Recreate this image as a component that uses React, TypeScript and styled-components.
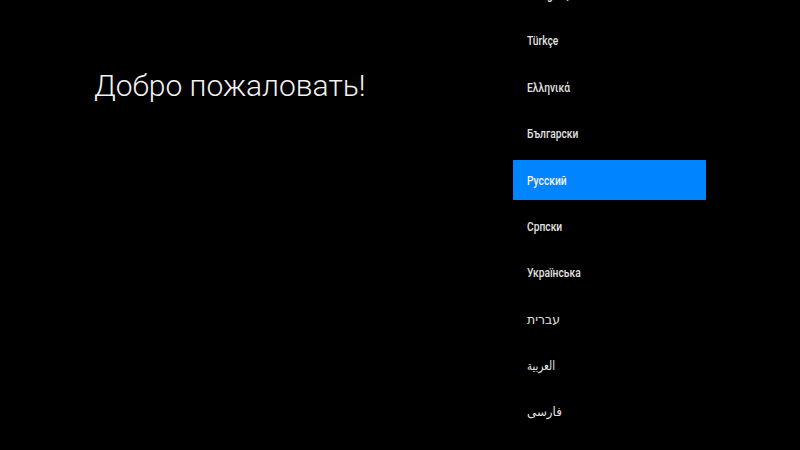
import React from "react"
import styled, { createGlobalStyle } from "styled-components"

const GlobalStyle = createGlobalStyle`
  html, body {
    margin: 0;
    padding: 0;
    background: #000;
  }
`;

const Screen = styled.div`
  width: 800px;
  height: 450px;
  background: #000;
  display: flex;
  overflow: hidden;
  font-family: Roboto, "DejaVu Sans", sans-serif;
`;

const Intro = styled.div`
  width: 513px;
  flex-shrink: 0;
  padding: 71px 0 0 94px;
  box-sizing: border-box;
`;

const Title = styled.h1`
  margin: 0;
  font-size: 30px;
  line-height: 30px;
  font-weight: 300;
  color: #f2f2f2;
  white-space: nowrap;
`;

const LanguageList = styled.ul`
  list-style: none;
  margin: -25.5px 0 0;
  padding: 0;
  width: 193px;
  flex-shrink: 0;
  display: flex;
  flex-direction: column;
  gap: 6.375px;
`;

const LanguageItem = styled.li<{ $selected?: boolean }>`
  height: 40px;
  flex-shrink: 0;
  display: flex;
  align-items: center;
  padding-left: 14px;
  border-radius: 1px;
  font-size: 12.5px;
  font-weight: 500;
  color: ${(props) => (props.$selected ? "#f4f4f4" : "#e2e2e2")};
  background: ${(props) => (props.$selected ? "#0084ff" : "transparent")};
`;

const Label = styled.span<{ $scale: number }>`
  display: inline-block;
  unicode-bidi: plaintext;
  transform: scaleX(${(props) => props.$scale});
  transform-origin: left center;
  white-space: nowrap;
`;

const languages = [
  { name: "Tiếng Việt", scale: 0.82 },
  { name: "Türkçe", scale: 0.82 },
  { name: "Ελληνικά", scale: 0.82 },
  { name: "Български", scale: 0.82 },
  { name: "Русский", scale: 0.82 },
  { name: "Српски", scale: 0.82 },
  { name: "Українська", scale: 0.82 },
  { name: "עברית", scale: 1 },
  { name: "العربية", scale: 0.82 },
  { name: "فارسی", scale: 0.95 },
];

export default function App() {
  return (
    <>
      <GlobalStyle />
      <Screen>
        <Intro>
          <Title>Добро пожаловать!</Title>
        </Intro>
        <LanguageList>
          {languages.map((lang) => (
            <LanguageItem key={lang.name} $selected={lang.name === "Русский"}>
              <Label $scale={lang.scale}>{lang.name}</Label>
            </LanguageItem>
          ))}
        </LanguageList>
      </Screen>
    </>
  )
}
